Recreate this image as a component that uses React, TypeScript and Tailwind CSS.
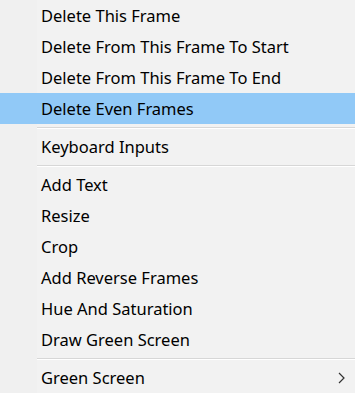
const items: (string | null)[] = [
  'Delete This Frame',
  'Delete From This Frame To Start',
  'Delete From This Frame To End',
  'Delete Even Frames',
  null,
  'Keyboard Inputs',
  null,
  'Add Text',
  'Resize',
  'Crop',
  'Add Reverse Frames',
  'Hue And Saturation',
  'Draw Green Screen',
  null,
  'Green Screen',
];

function Separator() {
  return (
    <div className="flex h-[7px]">
      <div className="w-[37px] shrink-0 bg-[#f0f0f0]" />
      <div className="flex-1 pt-[3px]">
        <div className="h-px bg-[#d7d7d7]" />
        <div className="h-px bg-white" />
      </div>
    </div>
  );
}

export default function App() {
  return (
    <div
      className="w-[355px] h-[393px] overflow-hidden bg-[#f2f2f2] text-black"
      style={{ fontFamily: '"Noto Sans", "Open Sans", sans-serif' }}
    >
      {items.map((label, i) => {
        if (label === null) return <Separator key={i} />;
        const active = label === 'Delete Even Frames';
        const sub = label === 'Green Screen';
        return (
          <div
            key={i}
            className={`relative flex h-[31px] items-start ${active ? 'bg-[#91c9f7]' : ''}`}
          >
            <div className={`w-[37px] h-full shrink-0 ${active ? '' : 'bg-[#f0f0f0]'}`} />
            <span className="pl-[4px] pt-[8px] text-[16.5px] leading-none whitespace-nowrap">{label}</span>
            {sub && (
              <svg className="absolute right-[10px] top-[10px]" width="7" height="12" viewBox="0 0 7 12">
                <path d="M1 1 L6 6 L1 11" fill="none" stroke="#333" strokeWidth="1.2" />
              </svg>
            )}
          </div>
        );
      })}
    </div>
  );
}
